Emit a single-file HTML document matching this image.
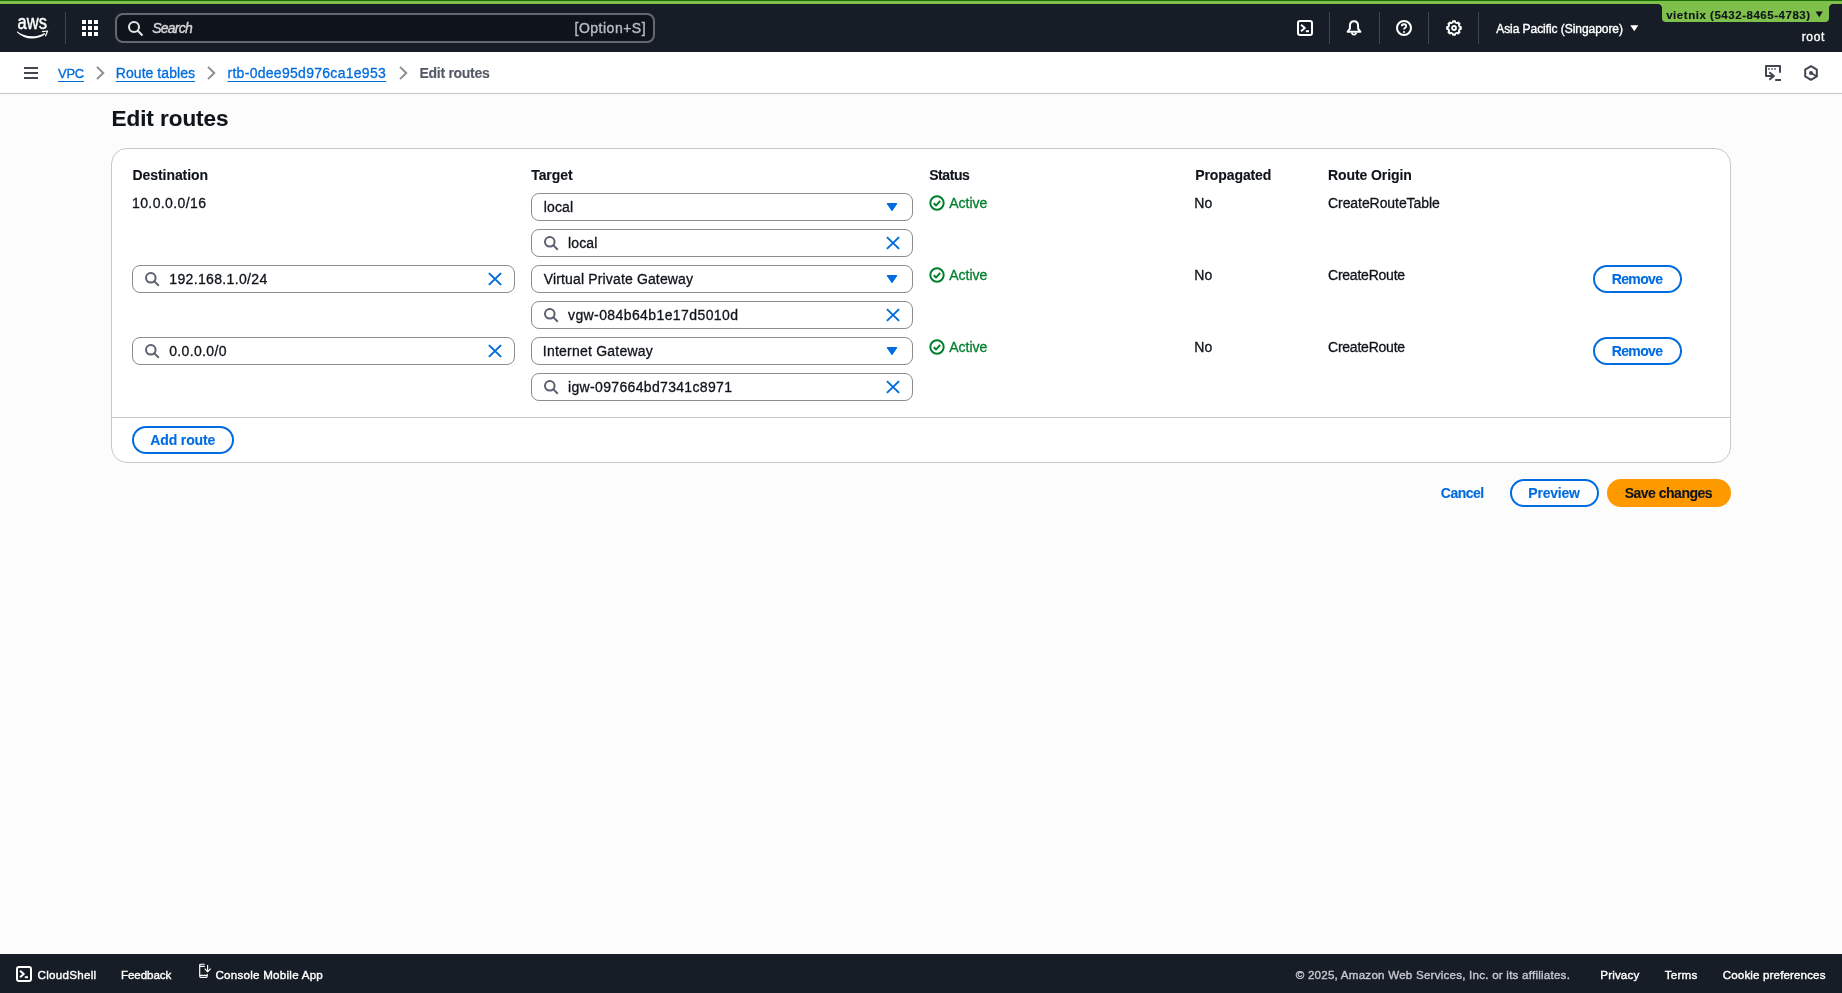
<!DOCTYPE html>
<html lang="en"><head><meta charset="utf-8"><title>Edit routes | VPC Console</title>
<style>
html,body{margin:0;padding:0}
body{width:1842px;height:993px;position:relative;overflow:hidden;background:#fcfcfd;font-family:'Liberation Sans',sans-serif;-webkit-font-smoothing:antialiased}
.t{position:absolute;white-space:nowrap;margin:0;padding:0;-webkit-text-stroke:0.3px currentColor}
.a{position:absolute;box-sizing:border-box}
svg{position:absolute;overflow:visible}
</style></head><body>
<div id="root" style="position:absolute;left:0;top:0;width:1842px;height:993px;will-change:transform">
<!-- top green strip -->
<div class="a" style="left:0;top:0;width:1842px;height:4px;background:#7fbf4b"></div>
<div class="a" style="left:0;top:0;width:1842px;height:1px;background:#186d04"></div>
<!-- header -->
<div class="a" style="left:0;top:4px;width:1842px;height:48px;background:#161d26"></div>
<!-- aws logo -->
<svg style="left:17px;top:18px" width="31" height="21" viewBox="0 0 31 21">
<text x="0.6" y="10.9" font-family="'Liberation Sans',sans-serif" font-size="19.6" fill="#fff" stroke="#fff" stroke-width="0.45" textLength="29.4" lengthAdjust="spacingAndGlyphs">aws</text>
<path d="M0 13.2 C 8 19.4, 19 20, 27.6 15 L28.2 16.2 C 19 22.6, 7.5 21.6, 0 14.4 Z" fill="#fff"/>
<path d="M25.4 13.6 L30.6 13 L28.6 17.8" fill="none" stroke="#fff" stroke-width="1.2" stroke-linejoin="round" stroke-linecap="round"/>
</svg>
<div class="a" style="left:65px;top:12px;width:1px;height:32px;background:#424650"></div>
<!-- grid icon -->
<svg style="left:82px;top:20px" width="16" height="16" viewBox="0 0 16 16" fill="#fff">
<rect x="0" y="0" width="4" height="4"/><rect x="6" y="0" width="4" height="4"/><rect x="12" y="0" width="4" height="4"/>
<rect x="0" y="6" width="4" height="4"/><rect x="6" y="6" width="4" height="4"/><rect x="12" y="6" width="4" height="4"/>
<rect x="0" y="12" width="4" height="4"/><rect x="6" y="12" width="4" height="4"/><rect x="12" y="12" width="4" height="4"/>
</svg>
<!-- search box -->
<div class="a" style="left:115px;top:13px;width:540px;height:30px;border:2px solid #656871;border-radius:8px;background:#0f141a"></div>
<svg style="left:127px;top:20px" width="17" height="17" viewBox="0 0 17 17" fill="none" stroke="#e4e6ea" stroke-width="2"><circle cx="7" cy="7" r="5"/><path d="M10.8 10.8 L15.5 15.5"/></svg>
<!-- header right icons -->
<svg style="left:1297px;top:20px" width="16" height="16" viewBox="0 0 16 16" fill="none" stroke="#fff" stroke-width="2" stroke-linejoin="round"><rect x="1" y="1" width="14" height="14" rx="2"/><path d="M4 4.8 L7.8 8 L4 11.2" stroke-width="2"/><path d="M8.8 11.2 H12" stroke-width="2"/></svg>
<div class="a" style="left:1329px;top:12px;width:1px;height:32px;background:#424650"></div>
<svg style="left:1346px;top:20px" width="16" height="16" viewBox="0 0 16 16" fill="none" stroke="#fff" stroke-width="2" stroke-linejoin="round"><path d="M8 1.2 C5.1 1.2 3.9 3.4 3.9 6 V8.6 L1.6 11.8 H14.4 L12.1 8.6 V6 C12.1 3.4 10.9 1.2 8 1.2 Z"/><path d="M5.9 13.4 Q8 16 10.1 13.4" stroke-width="1.7" stroke-linecap="round"/></svg>
<div class="a" style="left:1379px;top:12px;width:1px;height:32px;background:#424650"></div>
<svg style="left:1396px;top:20px" width="16" height="16" viewBox="0 0 16 16" fill="none" stroke="#fff" stroke-width="2"><circle cx="8" cy="8" r="7"/><path d="M5.8 6.2 C5.8 3.6 10.2 3.6 10.2 6.2 C10.2 7.8 8 7.8 8 9.6" stroke-width="1.8"/><circle cx="8" cy="12" r="0.6" fill="#fff" stroke-width="1"/></svg>
<div class="a" style="left:1428px;top:12px;width:1px;height:32px;background:#424650"></div>
<svg style="left:1446px;top:20px" width="16" height="16" viewBox="0 0 16 16" fill="none" stroke="#fff" stroke-width="1.8" stroke-linejoin="round"><path d="M6.80 2.43 L6.90 1.09 L9.10 1.09 L9.20 2.43 L11.09 3.21 L12.11 2.34 L13.66 3.89 L12.79 4.91 L13.57 6.80 L14.91 6.90 L14.91 9.10 L13.57 9.20 L12.79 11.09 L13.66 12.11 L12.11 13.66 L11.09 12.79 L9.20 13.57 L9.10 14.91 L6.90 14.91 L6.80 13.57 L4.91 12.79 L3.89 13.66 L2.34 12.11 L3.21 11.09 L2.43 9.20 L1.09 9.10 L1.09 6.90 L2.43 6.80 L3.21 4.91 L2.34 3.89 L3.89 2.34 L4.91 3.21 Z"/><circle cx="8" cy="8" r="2"/></svg>
<div class="a" style="left:1478px;top:12px;width:1px;height:32px;background:#424650"></div>
<svg style="left:1630px;top:25px" width="9" height="7" viewBox="0 0 9 7"><path d="M0.3 0.2 H8.3 L4.3 6.3 Z" fill="#fff"/></svg>
<!-- account label -->
<div class="a" style="left:1662px;top:3px;width:167px;height:19px;background:#7fbf4b;border-radius:0 0 4px 4px"></div>
<svg style="left:1815px;top:11px" width="9" height="7" viewBox="0 0 9 7"><path d="M0.6 0.4 H7.8 L4.2 6.3 Z" fill="#0f141a"/></svg>
<div class="a" style="left:1658px;top:4px;width:4px;height:4px;background:radial-gradient(circle at 0 100%,#161d26 3.6px,#7fbf4b 4.3px)"></div>
<div class="a" style="left:1829px;top:4px;width:4px;height:4px;background:radial-gradient(circle at 100% 100%,#161d26 3.6px,#7fbf4b 4.3px)"></div>
<!-- breadcrumb bar -->
<div class="a" style="left:0;top:52px;width:1842px;height:42px;background:#fff;border-bottom:1px solid #c6c6cd"></div>
<div class="a" style="left:24px;top:67px;width:14px;height:2px;background:#424650"></div>
<div class="a" style="left:24px;top:72px;width:14px;height:2px;background:#424650"></div>
<div class="a" style="left:24px;top:77px;width:14px;height:2px;background:#424650"></div>
<svg style="left:96px;top:66px" width="10" height="14" viewBox="0 0 10 14" fill="none" stroke="#8c8c94" stroke-width="2"><path d="M1.0 0.9 L7.2 7 L1.0 13.1"/></svg>
<svg style="left:207px;top:66px" width="10" height="14" viewBox="0 0 10 14" fill="none" stroke="#8c8c94" stroke-width="2"><path d="M1.0 0.9 L7.2 7 L1.0 13.1"/></svg>
<svg style="left:399px;top:66px" width="10" height="14" viewBox="0 0 10 14" fill="none" stroke="#8c8c94" stroke-width="2"><path d="M1.0 0.9 L7.2 7 L1.0 13.1"/></svg>
<!-- breadcrumb right icons -->
<svg style="left:1765px;top:65px" width="17" height="17" viewBox="0 0 17 17" fill="none" stroke="#424650" stroke-width="2" stroke-linejoin="round"><path d="M15 7.8 V1 H1 V11 H8.4"/><path d="M4.4 7.2 L8.8 11 L4.4 14.8" stroke-linejoin="miter"/><path d="M10.2 15 H16"/><path d="M3.1 4 H4.7 M6.2 4 H7.8 M9.2 4 H10.8" stroke-width="1.6"/></svg>
<svg style="left:1803px;top:65px" width="16" height="16" viewBox="0 0 16 16" fill="none" stroke="#424650" stroke-width="2" stroke-linejoin="round"><path d="M8 1.2 L13.8 4.6 V11.4 L8 14.8 L2.2 11.4 V4.6 Z"/><circle cx="8" cy="7.9" r="2" fill="#424650" stroke="none"/><path d="M8.6 8.3 L13.8 11.4" stroke-width="1.8"/></svg>
<!-- container -->
<div class="a" style="left:111px;top:148px;width:1620px;height:315px;background:#fff;border:1px solid #c6c6cd;border-radius:16px"></div>
<div class="a" style="left:112px;top:417px;width:1618px;height:1px;background:#c6c6cd"></div>
<div class="a" style="left:531px;top:193px;width:382px;height:28px;border:1px solid #8c8c94;border-radius:8px;background:#fff"></div>
<svg style="left:886px;top:202px" width="12" height="10" viewBox="0 0 12 10"><path d="M1.4 1.6 H10.6 L6 8.4 Z" fill="#006ce0" stroke="#006ce0" stroke-width="1.2" stroke-linejoin="round"/></svg>
<div class="a" style="left:531px;top:229px;width:382px;height:28px;border:1px solid #8c8c94;border-radius:8px;background:#fff"></div>
<svg style="left:543px;top:235px" width="16" height="16" viewBox="0 0 16 16" fill="none" stroke="#5a6070" stroke-width="2"><circle cx="6.8" cy="6.8" r="4.8"/><path d="M10.4 10.4 L14.8 14.8"/></svg>
<svg style="left:886px;top:236px" width="14" height="14" viewBox="0 0 14 14" fill="none" stroke="#006ce0" stroke-width="2"><path d="M0.9 1.1 L13.1 12.9 M13.1 1.1 L0.9 12.9"/></svg>
<svg style="left:929px;top:195px" width="16" height="16" viewBox="0 0 16 16" fill="none" stroke="#00802f" stroke-width="2"><circle cx="8" cy="8" r="6.7"/><path d="M4.8 8.2 L7.2 10.4 L11.2 5.8" stroke-linejoin="round"/></svg>
<div class="a" style="left:531px;top:265px;width:382px;height:28px;border:1px solid #8c8c94;border-radius:8px;background:#fff"></div>
<svg style="left:886px;top:274px" width="12" height="10" viewBox="0 0 12 10"><path d="M1.4 1.6 H10.6 L6 8.4 Z" fill="#006ce0" stroke="#006ce0" stroke-width="1.2" stroke-linejoin="round"/></svg>
<div class="a" style="left:531px;top:301px;width:382px;height:28px;border:1px solid #8c8c94;border-radius:8px;background:#fff"></div>
<svg style="left:543px;top:307px" width="16" height="16" viewBox="0 0 16 16" fill="none" stroke="#5a6070" stroke-width="2"><circle cx="6.8" cy="6.8" r="4.8"/><path d="M10.4 10.4 L14.8 14.8"/></svg>
<svg style="left:886px;top:308px" width="14" height="14" viewBox="0 0 14 14" fill="none" stroke="#006ce0" stroke-width="2"><path d="M0.9 1.1 L13.1 12.9 M13.1 1.1 L0.9 12.9"/></svg>
<svg style="left:929px;top:267px" width="16" height="16" viewBox="0 0 16 16" fill="none" stroke="#00802f" stroke-width="2"><circle cx="8" cy="8" r="6.7"/><path d="M4.8 8.2 L7.2 10.4 L11.2 5.8" stroke-linejoin="round"/></svg>
<div class="a" style="left:531px;top:337px;width:382px;height:28px;border:1px solid #8c8c94;border-radius:8px;background:#fff"></div>
<svg style="left:886px;top:346px" width="12" height="10" viewBox="0 0 12 10"><path d="M1.4 1.6 H10.6 L6 8.4 Z" fill="#006ce0" stroke="#006ce0" stroke-width="1.2" stroke-linejoin="round"/></svg>
<div class="a" style="left:531px;top:373px;width:382px;height:28px;border:1px solid #8c8c94;border-radius:8px;background:#fff"></div>
<svg style="left:543px;top:379px" width="16" height="16" viewBox="0 0 16 16" fill="none" stroke="#5a6070" stroke-width="2"><circle cx="6.8" cy="6.8" r="4.8"/><path d="M10.4 10.4 L14.8 14.8"/></svg>
<svg style="left:886px;top:380px" width="14" height="14" viewBox="0 0 14 14" fill="none" stroke="#006ce0" stroke-width="2"><path d="M0.9 1.1 L13.1 12.9 M13.1 1.1 L0.9 12.9"/></svg>
<svg style="left:929px;top:339px" width="16" height="16" viewBox="0 0 16 16" fill="none" stroke="#00802f" stroke-width="2"><circle cx="8" cy="8" r="6.7"/><path d="M4.8 8.2 L7.2 10.4 L11.2 5.8" stroke-linejoin="round"/></svg>
<div class="a" style="left:132px;top:265px;width:383px;height:28px;border:1px solid #8c8c94;border-radius:8px;background:#fff"></div>
<svg style="left:144px;top:271px" width="16" height="16" viewBox="0 0 16 16" fill="none" stroke="#5a6070" stroke-width="2"><circle cx="6.8" cy="6.8" r="4.8"/><path d="M10.4 10.4 L14.8 14.8"/></svg>
<svg style="left:488px;top:272px" width="14" height="14" viewBox="0 0 14 14" fill="none" stroke="#006ce0" stroke-width="2"><path d="M0.9 1.1 L13.1 12.9 M13.1 1.1 L0.9 12.9"/></svg>
<div class="a" style="left:1593px;top:265px;width:89px;height:28px;border:2px solid #006ce0;border-radius:14px;background:#fff"></div>
<div class="a" style="left:132px;top:337px;width:383px;height:28px;border:1px solid #8c8c94;border-radius:8px;background:#fff"></div>
<svg style="left:144px;top:343px" width="16" height="16" viewBox="0 0 16 16" fill="none" stroke="#5a6070" stroke-width="2"><circle cx="6.8" cy="6.8" r="4.8"/><path d="M10.4 10.4 L14.8 14.8"/></svg>
<svg style="left:488px;top:344px" width="14" height="14" viewBox="0 0 14 14" fill="none" stroke="#006ce0" stroke-width="2"><path d="M0.9 1.1 L13.1 12.9 M13.1 1.1 L0.9 12.9"/></svg>
<div class="a" style="left:1593px;top:337px;width:89px;height:28px;border:2px solid #006ce0;border-radius:14px;background:#fff"></div>
<div class="a" style="left:132px;top:426px;width:102px;height:28px;border:2px solid #006ce0;border-radius:14px;background:#fff"></div>
<div class="a" style="left:1510px;top:479px;width:89px;height:28px;border:2px solid #006ce0;border-radius:14px;background:#fff"></div>
<div class="a" style="left:1607px;top:479px;width:124px;height:28px;border:2px solid #ff9900;border-radius:14px;background:#ff9900"></div>
<div class="a" style="left:0;top:954px;width:1842px;height:39px;background:#161d26"></div>
<svg style="left:16px;top:966px" width="16" height="16" viewBox="0 0 16 16" fill="none" stroke="#fff" stroke-width="2" stroke-linejoin="round"><rect x="1" y="1" width="14" height="14" rx="2"/><path d="M4 4.8 L7.8 8 L4 11.2" stroke-width="2"/><path d="M8.8 11.2 H12" stroke-width="2"/></svg>
<svg style="left:199px;top:963px" width="13" height="16" viewBox="0 0 13 16" fill="none" stroke="#fff" stroke-width="1.15" stroke-linejoin="round"><path d="M5.8 1.2 H1.7 Q0.7 1.2 0.7 2.2 V13.3 Q0.7 14.3 1.7 14.3 H7.2 Q8.2 14.3 8.2 13.3 V11"/><path d="M0.7 3.3 H5.8 M0.7 12.3 H8.2"/><path d="M8.6 2 V8.6 M5.7 5.7 L8.6 8.8 L11.6 5.7"/></svg>

<span class="t" style="left:152.20px;top:18px;font:italic 14px/20px 'Liberation Sans',sans-serif;letter-spacing:-0.754px;color:#d4d6db;-webkit-text-stroke-width:0.38px;">Search</span>
<span class="t" style="left:574.50px;top:18px;font:14px/20px 'Liberation Sans',sans-serif;letter-spacing:0.505px;color:#b9bcc4;-webkit-text-stroke-width:0.38px;">[Option+S]</span>
<span class="t" style="left:1496.20px;top:20px;font:12px/18px 'Liberation Sans',sans-serif;letter-spacing:-0.055px;color:#ffffff;-webkit-text-stroke-width:0.38px;">Asia Pacific (Singapore)</span>
<span class="t" style="left:1666.20px;top:7px;font:bold 11.5px/16px 'Liberation Sans',sans-serif;letter-spacing:0.532px;color:#0f141a;-webkit-text-stroke-width:0.12px;">vietnix (5432-8465-4783)</span>
<span class="t" style="left:1801.70px;top:28px;font:12px/18px 'Liberation Sans',sans-serif;letter-spacing:0.652px;color:#ffffff;-webkit-text-stroke-width:0.38px;">root</span>
<span class="t" style="left:58.00px;top:64px;font:13px/19px 'Liberation Sans',sans-serif;letter-spacing:-0.271px;color:#006ce0;text-decoration:underline;text-decoration-thickness:1px;text-underline-offset:3px;">VPC</span>
<span class="t" style="left:115.80px;top:63px;font:14px/20px 'Liberation Sans',sans-serif;letter-spacing:0.054px;color:#006ce0;text-decoration:underline;text-decoration-thickness:1px;text-underline-offset:3px;">Route tables</span>
<span class="t" style="left:227.50px;top:63px;font:14px/20px 'Liberation Sans',sans-serif;letter-spacing:0.285px;color:#006ce0;text-decoration:underline;text-decoration-thickness:1px;text-underline-offset:3px;">rtb-0dee95d976ca1e953</span>
<span class="t" style="left:419.50px;top:63px;font:bold 14px/20px 'Liberation Sans',sans-serif;letter-spacing:-0.283px;color:#535966;-webkit-text-stroke-width:0.12px;">Edit routes</span>
<span class="t" style="left:111.50px;top:104px;font:bold 22.5px/29px 'Liberation Sans',sans-serif;letter-spacing:-0.050px;color:#0f141a;-webkit-text-stroke-width:0.12px;">Edit routes</span>
<span class="t" style="left:132.50px;top:165px;font:bold 14px/20px 'Liberation Sans',sans-serif;letter-spacing:-0.068px;color:#0f141a;-webkit-text-stroke-width:0.12px;">Destination</span>
<span class="t" style="left:531.20px;top:165px;font:bold 14px/20px 'Liberation Sans',sans-serif;letter-spacing:-0.057px;color:#0f141a;-webkit-text-stroke-width:0.12px;">Target</span>
<span class="t" style="left:929.20px;top:165px;font:bold 14px/20px 'Liberation Sans',sans-serif;letter-spacing:-0.440px;color:#0f141a;-webkit-text-stroke-width:0.12px;">Status</span>
<span class="t" style="left:1195.30px;top:165px;font:bold 14px/20px 'Liberation Sans',sans-serif;letter-spacing:-0.107px;color:#0f141a;-webkit-text-stroke-width:0.12px;">Propagated</span>
<span class="t" style="left:1328.00px;top:165px;font:bold 14px/20px 'Liberation Sans',sans-serif;letter-spacing:-0.084px;color:#0f141a;-webkit-text-stroke-width:0.12px;">Route Origin</span>
<span class="t" style="left:132.00px;top:193px;font:14px/20px 'Liberation Sans',sans-serif;letter-spacing:0.392px;color:#0f141a;">10.0.0.0/16</span>
<span class="t" style="left:543.80px;top:197px;font:14px/20px 'Liberation Sans',sans-serif;letter-spacing:0.129px;color:#0f141a;">local</span>
<span class="t" style="left:568.00px;top:233px;font:14px/20px 'Liberation Sans',sans-serif;letter-spacing:0.129px;color:#0f141a;">local</span>
<span class="t" style="left:169.30px;top:269px;font:14px/20px 'Liberation Sans',sans-serif;letter-spacing:0.351px;color:#0f141a;">192.168.1.0/24</span>
<span class="t" style="left:543.80px;top:269px;font:14px/20px 'Liberation Sans',sans-serif;letter-spacing:0.144px;color:#0f141a;">Virtual Private Gateway</span>
<span class="t" style="left:568.00px;top:305px;font:14px/20px 'Liberation Sans',sans-serif;letter-spacing:0.403px;color:#0f141a;">vgw-084b64b1e17d5010d</span>
<span class="t" style="left:169.20px;top:341px;font:14px/20px 'Liberation Sans',sans-serif;letter-spacing:0.350px;color:#0f141a;">0.0.0.0/0</span>
<span class="t" style="left:542.80px;top:341px;font:14px/20px 'Liberation Sans',sans-serif;letter-spacing:0.226px;color:#0f141a;">Internet Gateway</span>
<span class="t" style="left:568.00px;top:377px;font:14px/20px 'Liberation Sans',sans-serif;letter-spacing:0.337px;color:#0f141a;">igw-097664bd7341c8971</span>
<span class="t" style="left:949.20px;top:193px;font:14px/20px 'Liberation Sans',sans-serif;letter-spacing:-0.008px;color:#00802f;">Active</span>
<span class="t" style="left:1194.30px;top:193px;font:14px/20px 'Liberation Sans',sans-serif;letter-spacing:0.090px;color:#0f141a;">No</span>
<span class="t" style="left:1328.00px;top:193px;font:14px/20px 'Liberation Sans',sans-serif;letter-spacing:-0.071px;color:#0f141a;">CreateRouteTable</span>
<span class="t" style="left:949.20px;top:265px;font:14px/20px 'Liberation Sans',sans-serif;letter-spacing:-0.008px;color:#00802f;">Active</span>
<span class="t" style="left:1194.30px;top:265px;font:14px/20px 'Liberation Sans',sans-serif;letter-spacing:0.090px;color:#0f141a;">No</span>
<span class="t" style="left:1328.00px;top:265px;font:14px/20px 'Liberation Sans',sans-serif;letter-spacing:-0.229px;color:#0f141a;">CreateRoute</span>
<span class="t" style="left:949.20px;top:337px;font:14px/20px 'Liberation Sans',sans-serif;letter-spacing:-0.008px;color:#00802f;">Active</span>
<span class="t" style="left:1194.30px;top:337px;font:14px/20px 'Liberation Sans',sans-serif;letter-spacing:0.090px;color:#0f141a;">No</span>
<span class="t" style="left:1328.00px;top:337px;font:14px/20px 'Liberation Sans',sans-serif;letter-spacing:-0.229px;color:#0f141a;">CreateRoute</span>
<span class="t" style="left:1611.70px;top:269px;font:bold 14px/20px 'Liberation Sans',sans-serif;letter-spacing:-0.617px;color:#006ce0;-webkit-text-stroke-width:0.12px;">Remove</span>
<span class="t" style="left:1611.70px;top:341px;font:bold 14px/20px 'Liberation Sans',sans-serif;letter-spacing:-0.617px;color:#006ce0;-webkit-text-stroke-width:0.12px;">Remove</span>
<span class="t" style="left:150.30px;top:430px;font:bold 14px/20px 'Liberation Sans',sans-serif;letter-spacing:-0.140px;color:#006ce0;-webkit-text-stroke-width:0.12px;">Add route</span>
<span class="t" style="left:1440.80px;top:483px;font:bold 14px/20px 'Liberation Sans',sans-serif;letter-spacing:-0.504px;color:#006ce0;-webkit-text-stroke-width:0.12px;">Cancel</span>
<span class="t" style="left:1528.30px;top:483px;font:bold 14px/20px 'Liberation Sans',sans-serif;letter-spacing:-0.222px;color:#006ce0;-webkit-text-stroke-width:0.12px;">Preview</span>
<span class="t" style="left:1624.70px;top:483px;font:bold 14px/20px 'Liberation Sans',sans-serif;letter-spacing:-0.500px;color:#0f141a;-webkit-text-stroke-width:0.12px;">Save changes</span>
<span class="t" style="left:37.50px;top:967px;font:11.6px/16px 'Liberation Sans',sans-serif;letter-spacing:0.289px;color:#ffffff;-webkit-text-stroke-width:0.38px;">CloudShell</span>
<span class="t" style="left:120.90px;top:967px;font:11.6px/16px 'Liberation Sans',sans-serif;letter-spacing:-0.060px;color:#ffffff;-webkit-text-stroke-width:0.38px;">Feedback</span>
<span class="t" style="left:215.40px;top:967px;font:11.6px/16px 'Liberation Sans',sans-serif;letter-spacing:0.252px;color:#ffffff;-webkit-text-stroke-width:0.38px;">Console Mobile App</span>
<span class="t" style="left:1295.70px;top:967px;font:11.6px/16px 'Liberation Sans',sans-serif;letter-spacing:0.226px;color:#c6c6cd;-webkit-text-stroke-width:0.38px;">© 2025, Amazon Web Services, Inc. or its affiliates.</span>
<span class="t" style="left:1600.30px;top:967px;font:11.6px/16px 'Liberation Sans',sans-serif;letter-spacing:0.148px;color:#ffffff;-webkit-text-stroke-width:0.38px;">Privacy</span>
<span class="t" style="left:1664.80px;top:967px;font:11.6px/16px 'Liberation Sans',sans-serif;letter-spacing:0.209px;color:#ffffff;-webkit-text-stroke-width:0.38px;">Terms</span>
<span class="t" style="left:1722.80px;top:967px;font:11.6px/16px 'Liberation Sans',sans-serif;letter-spacing:0.127px;color:#ffffff;-webkit-text-stroke-width:0.38px;">Cookie preferences</span>
</div>
</body></html>
